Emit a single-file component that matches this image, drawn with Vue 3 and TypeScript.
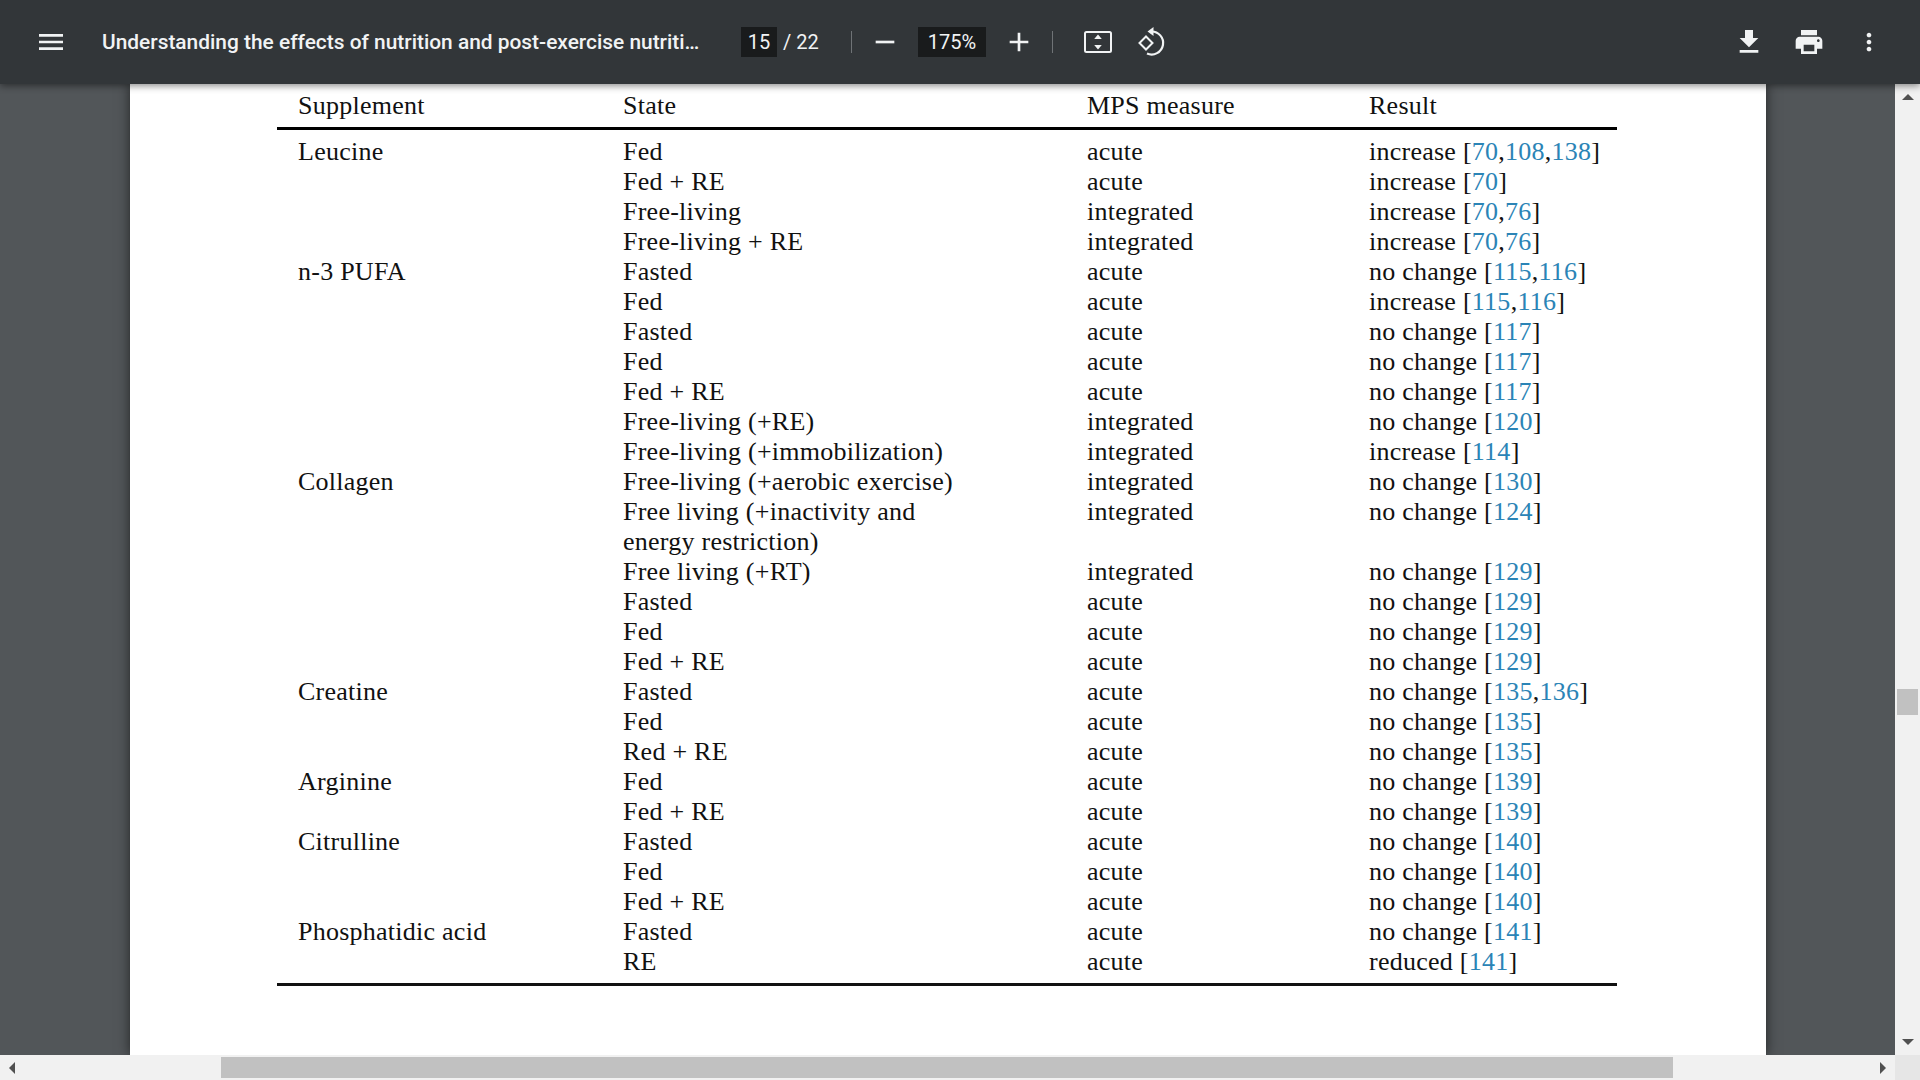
<script setup lang="ts">
type Row = { s?: string; st: string; m?: string; r?: string; refs?: number[] };
const rows: Row[] = [
  { s: 'Leucine', st: 'Fed', m: 'acute', r: 'increase', refs: [70, 108, 138] },
  { st: 'Fed + RE', m: 'acute', r: 'increase', refs: [70] },
  { st: 'Free-living', m: 'integrated', r: 'increase', refs: [70, 76] },
  { st: 'Free-living + RE', m: 'integrated', r: 'increase', refs: [70, 76] },
  { s: 'n-3 PUFA', st: 'Fasted', m: 'acute', r: 'no change', refs: [115, 116] },
  { st: 'Fed', m: 'acute', r: 'increase', refs: [115, 116] },
  { st: 'Fasted', m: 'acute', r: 'no change', refs: [117] },
  { st: 'Fed', m: 'acute', r: 'no change', refs: [117] },
  { st: 'Fed + RE', m: 'acute', r: 'no change', refs: [117] },
  { st: 'Free-living (+RE)', m: 'integrated', r: 'no change', refs: [120] },
  { st: 'Free-living (+immobilization)', m: 'integrated', r: 'increase', refs: [114] },
  { s: 'Collagen', st: 'Free-living (+aerobic exercise)', m: 'integrated', r: 'no change', refs: [130] },
  { st: 'Free living (+inactivity and', m: 'integrated', r: 'no change', refs: [124] },
  { st: 'energy restriction)' },
  { st: 'Free living (+RT)', m: 'integrated', r: 'no change', refs: [129] },
  { st: 'Fasted', m: 'acute', r: 'no change', refs: [129] },
  { st: 'Fed', m: 'acute', r: 'no change', refs: [129] },
  { st: 'Fed + RE', m: 'acute', r: 'no change', refs: [129] },
  { s: 'Creatine', st: 'Fasted', m: 'acute', r: 'no change', refs: [135, 136] },
  { st: 'Fed', m: 'acute', r: 'no change', refs: [135] },
  { st: 'Red + RE', m: 'acute', r: 'no change', refs: [135] },
  { s: 'Arginine', st: 'Fed', m: 'acute', r: 'no change', refs: [139] },
  { st: 'Fed + RE', m: 'acute', r: 'no change', refs: [139] },
  { s: 'Citrulline', st: 'Fasted', m: 'acute', r: 'no change', refs: [140] },
  { st: 'Fed', m: 'acute', r: 'no change', refs: [140] },
  { st: 'Fed + RE', m: 'acute', r: 'no change', refs: [140] },
  { s: 'Phosphatidic acid', st: 'Fasted', m: 'acute', r: 'no change', refs: [141] },
  { st: 'RE', m: 'acute', r: 'reduced', refs: [141] },
];
</script>

<template>
  <div class="app">
    <header class="toolbar">
      <svg class="ico" viewBox="0 0 24 24"><path d="M3 18h18v-2H3v2zm0-5h18v-2H3v2zm0-7v2h18V6H3z" /></svg>
      <div class="title">Understanding the effects of nutrition and post-exercise nutriti…</div>
      <div class="box page-box">15</div>
      <div class="total">/ 22</div>
      <div class="divider first"></div>
      <svg class="ico minus" viewBox="0 0 24 24"><path d="M19 13H5v-2h14v2z" /></svg>
      <div class="box zoom-box">175%</div>
      <svg class="ico plus" viewBox="0 0 24 24"><path d="M19 13h-6v6h-2v-6H5v-2h6V5h2v6h6v2z" /></svg>
      <div class="divider second"></div>
      <svg class="ico fit" viewBox="0 0 32 32">
        <rect x="3" y="6" width="26" height="20" rx="1.5" fill="none" stroke="#f1f3f4" stroke-width="2" />
        <path d="M16 8.500l3.800 4.500h-7.600zM16 23.500l-3.800-4.500h7.600z" />
      </svg>
      <svg class="ico rotate" viewBox="0 0 32 32">
        <path d="M10 10.5l6.5 6.5-6.5 6.5L3.500 17z" fill="none" stroke="#f1f3f4" stroke-width="2" />
        <path d="M15 5.500A11.500 11.500 0 1 1 11 27.500" fill="none" stroke="#f1f3f4" stroke-width="2.200" />
        <path d="M17.500 1v9l-6-4.500z" />
      </svg>
      <div class="spacer"></div>
      <svg class="ico" viewBox="0 0 24 24"><path d="M19 9h-4V3H9v6H5l7 7 7-7zM5 18v2h14v-2H5z" /></svg>
      <svg class="ico print" viewBox="0 0 24 24"><path d="M19 8H5c-1.660 0-3 1.340-3 3v6h4v4h12v-4h4v-6c0-1.660-1.340-3-3-3zm-3 11H8v-5h8v5zm3-7c-.55 0-1-.45-1-1s.45-1 1-1 1 .45 1 1-.45 1-1 1zm-1-9H6v4h12V3z" /></svg>
      <svg class="ico dots" viewBox="0 0 24 24"><path d="M12 8c1.100 0 2-.9 2-2s-.9-2-2-2-2 .9-2 2 .9 2 2 2zm0 2c-1.100 0-2 .9-2 2s.9 2 2 2 2-.9 2-2-.9-2-2-2zm0 6c-1.100 0-2 .9-2 2s.9 2 2 2 2-.9 2-2-.9-2-2-2z" /></svg>
    </header>

    <div class="workspace">
      <main class="viewer">
        <article class="page">
          <div class="grid head">
            <div class="first-col">Supplement</div>
            <div>State</div>
            <div>MPS measure</div>
            <div>Result</div>
          </div>
          <div class="rows">
            <div v-for="(row, i) in rows" :key="i" class="grid">
              <div class="first-col">{{ row.s }}</div>
              <div>{{ row.st }}</div>
              <div>{{ row.m }}</div>
              <div v-if="row.r">
                {{ row.r }} [<template v-for="(ref, j) in row.refs" :key="ref"><span v-if="j">,</span><a class="ref">{{ ref }}</a></template>]
              </div>
            </div>
          </div>
        </article>
      </main>
      <aside class="vscroll">
        <span class="tri up"></span>
        <span class="vthumb"></span>
        <span class="tri down"></span>
      </aside>
    </div>

    <div class="hscroll">
      <span class="tri left"></span>
      <span class="hthumb"></span>
      <span class="tri right"></span>
      <span class="corner"></span>
    </div>
  </div>
</template>

<style scoped>
.app {
  width: 1920px;
  height: 1080px;
  display: flex;
  flex-direction: column;
  overflow: hidden;
  background: #525659;
}
.toolbar {
  position: relative;
  z-index: 2;
  flex: 0 0 84px;
  display: flex;
  align-items: center;
  padding: 0 37px 0 35px;
  background: #323639;
  box-shadow: 0 2px 7px rgba(0, 0, 0, 0.45);
  color: #f1f3f4;
  font-family: Roboto, "Liberation Sans", sans-serif;
}
.ico {
  flex: none;
  width: 32px;
  height: 32px;
  fill: #f1f3f4;
}
.title {
  flex: none;
  width: 597px;
  margin-left: 35px;
  white-space: nowrap;
  font-size: 20.9px;
  font-weight: 500;
}
.box {
  flex: none;
  height: 30px;
  background: #191b1c;
  font-size: 20px;
  line-height: 30px;
  text-align: center;
}
.page-box {
  width: 36px;
  margin-left: 42px;
}
.total {
  flex: none;
  width: 38px;
  margin-left: 6px;
  font-size: 20px;
  white-space: nowrap;
}
.divider {
  flex: none;
  width: 1px;
  height: 22px;
  background: #6f7376;
}
.divider.first {
  margin-left: 30px;
}
.minus {
  margin-left: 17px;
}
.zoom-box {
  width: 68px;
  margin-left: 17px;
}
.plus {
  margin-left: 17px;
}
.divider.second {
  margin-left: 17px;
}
.fit {
  margin-left: 29px;
}
.rotate {
  margin-left: 22px;
}
.spacer {
  flex: 1;
}
.print {
  margin-left: 28px;
}
.dots {
  width: 28px;
  height: 28px;
  margin-left: 30px;
}
.workspace {
  flex: 1;
  min-height: 0;
  display: flex;
}
.viewer {
  flex: 1;
  min-width: 0;
  padding-left: 130px;
  background: #525659;
}
.page {
  box-sizing: border-box;
  width: 1636px;
  height: 100%;
  padding: 7px 0 0 147px;
  background: #fff;
  box-shadow: 0 0 12px rgba(0, 0, 0, 0.6);
  color: #111;
  font-family: "Liberation Serif", serif;
  font-size: 26px;
  letter-spacing: 0.25px;
  line-height: 30px;
}
.grid {
  display: grid;
  grid-template-columns: 346px 464px 282px 248px;
  height: 30px;
  white-space: nowrap;
}
.first-col {
  padding-left: 21px;
}
.head {
  width: 1340px;
  padding-bottom: 6px;
  border-bottom: 3px solid #000;
}
.rows {
  margin-top: 7px;
  width: 1340px;
  height: 846px;
  border-bottom: 3px solid #111;
}
.ref {
  color: #2b84b6;
}
.vscroll {
  flex: 0 0 25px;
  display: flex;
  flex-direction: column;
  align-items: center;
  background: #f1f1f1;
}
.vthumb {
  width: 21px;
  height: 26px;
  margin-top: 589px;
  background: #c1c1c1;
}
.tri {
  flex: none;
  width: 0;
  height: 0;
  border: solid transparent;
}
.tri.up {
  margin-top: 10px;
  border-width: 0 6px 6px;
  border-bottom-color: #505050;
}
.tri.down {
  margin-top: 324px;
  border-width: 6px 6px 0;
  border-top-color: #505050;
}
.hscroll {
  flex: 0 0 25px;
  display: flex;
  align-items: center;
  background: #f1f1f1;
}
.tri.left {
  margin-left: 9px;
  border-width: 6px 6px 6px 0;
  border-right-color: #505050;
}
.hthumb {
  width: 1452px;
  height: 21px;
  margin-left: 206px;
  background: #c1c1c1;
}
.tri.right {
  margin-left: 207px;
  border-width: 6px 0 6px 6px;
  border-left-color: #505050;
}
.corner {
  width: 25px;
  height: 25px;
  margin-left: auto;
  background: #e6e6e6;
}
</style>

<style>
html,
body {
  margin: 0;
  overflow: hidden;
}
</style>
